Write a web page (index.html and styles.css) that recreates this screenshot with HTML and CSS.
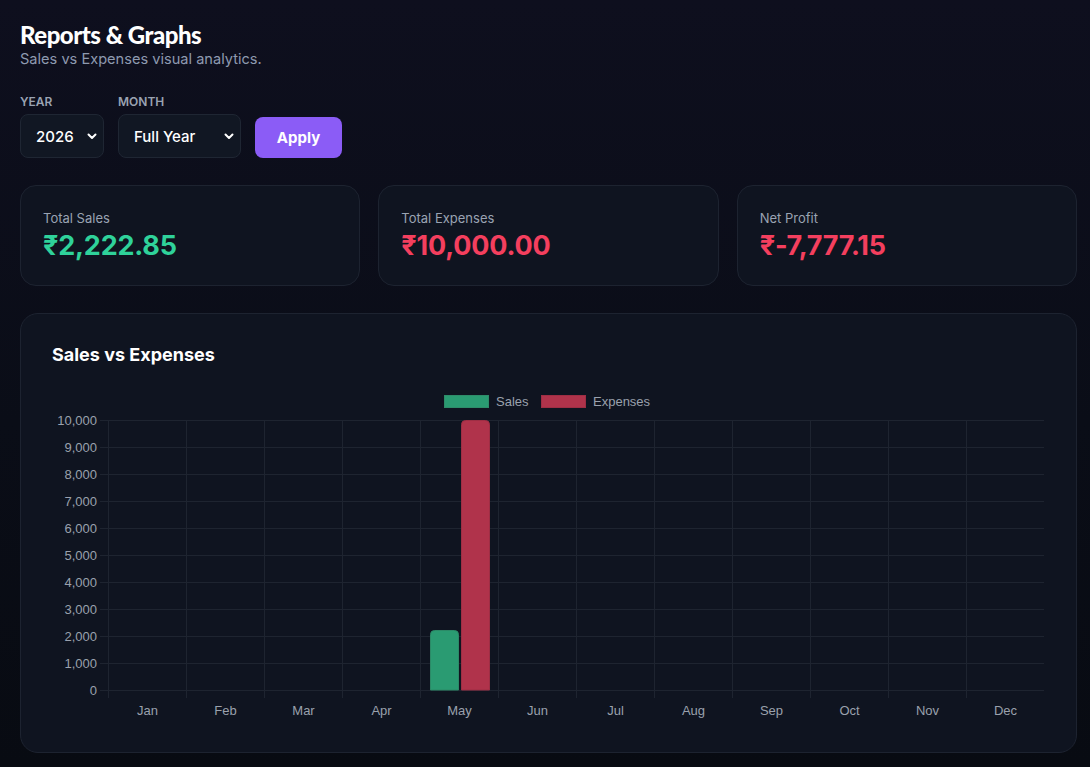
FILE: index.html
```html
<!DOCTYPE html>
<html lang="en">
<head>
  <meta charset="UTF-8" />
  <meta name="viewport" content="width=device-width, initial-scale=1.0" />
  <title>Reports &amp; Graphs</title>
  <link rel="stylesheet" href="styles.css">
</head>
<body>
  <div class="page">
    <header class="page-head">
      <h1>Reports &amp; Graphs</h1>
      <p class="sub">Sales vs Expenses visual analytics.</p>
    </header>

    <form class="filters" onsubmit="return false">
      <div class="field">
        <label for="year">Year</label>
        <div class="select-wrap year">
          <select id="year">
            <option>2026</option>
            <option>2025</option>
          </select>
          <svg class="chev" viewBox="0 0 12 12"><path d="M2.5 4.5 6 8l3.5-3.5" /></svg>
        </div>
      </div>
      <div class="field">
        <label for="month">Month</label>
        <div class="select-wrap month">
          <select id="month">
            <option>Full Year</option>
            <option>January</option>
          </select>
          <svg class="chev" viewBox="0 0 12 12"><path d="M2.5 4.5 6 8l3.5-3.5" /></svg>
        </div>
      </div>
      <button class="apply">Apply</button>
    </form>

    <div class="stats">
      <div class="stat">
        <div class="stat-label">Total Sales</div>
        <div class="stat-value green">₹2,222.85</div>
      </div>
      <div class="stat">
        <div class="stat-label">Total Expenses</div>
        <div class="stat-value red">₹10,000.00</div>
      </div>
      <div class="stat">
        <div class="stat-label">Net Profit</div>
        <div class="stat-value red">₹-7,777.15</div>
      </div>
    </div>

    <section class="chart-card">
      <h2>Sales vs Expenses</h2>
      <svg class="chart" width="993" height="336" viewBox="0 0 993 336">
        <!-- legend -->
        <rect x="392.5" y="10.5" width="44" height="12" fill="#2a9b72" stroke="#2e8c69" />
        <text class="legend" x="444" y="21">Sales</text>
        <rect x="489.5" y="10.5" width="44" height="12" fill="#b0334b" stroke="#9e2e44" />
        <text class="legend" x="541" y="21">Expenses</text>

        <g class="grid">
          <line x1="48" y1="35.5" x2="992" y2="35.5" />
          <line x1="48" y1="62.5" x2="992" y2="62.5" />
          <line x1="48" y1="89.5" x2="992" y2="89.5" />
          <line x1="48" y1="116.5" x2="992" y2="116.5" />
          <line x1="48" y1="143.5" x2="992" y2="143.5" />
          <line x1="48" y1="170.5" x2="992" y2="170.5" />
          <line x1="48" y1="197.5" x2="992" y2="197.5" />
          <line x1="48" y1="224.5" x2="992" y2="224.5" />
          <line x1="48" y1="251.5" x2="992" y2="251.5" />
          <line x1="48" y1="278.5" x2="992" y2="278.5" />
          <line x1="48" y1="305.5" x2="992" y2="305.5" />
          <line x1="56.5" y1="35" x2="56.5" y2="313" />
          <line x1="134.5" y1="35" x2="134.5" y2="313" />
          <line x1="212.5" y1="35" x2="212.5" y2="313" />
          <line x1="290.5" y1="35" x2="290.5" y2="313" />
          <line x1="368.5" y1="35" x2="368.5" y2="313" />
          <line x1="446.5" y1="35" x2="446.5" y2="313" />
          <line x1="524.5" y1="35" x2="524.5" y2="313" />
          <line x1="602.5" y1="35" x2="602.5" y2="313" />
          <line x1="680.5" y1="35" x2="680.5" y2="313" />
          <line x1="758.5" y1="35" x2="758.5" y2="313" />
          <line x1="836.5" y1="35" x2="836.5" y2="313" />
          <line x1="914.5" y1="35" x2="914.5" y2="313" />
        </g>

        <g class="ticks">
          <text x="45" y="40">10,000</text>
          <text x="45" y="67">9,000</text>
          <text x="45" y="94">8,000</text>
          <text x="45" y="121">7,000</text>
          <text x="45" y="148">6,000</text>
          <text x="45" y="175">5,000</text>
          <text x="45" y="202">4,000</text>
          <text x="45" y="229">3,000</text>
          <text x="45" y="256">2,000</text>
          <text x="45" y="283">1,000</text>
          <text x="45" y="310">0</text>
        </g>

        <g class="months">
          <text x="95.5" y="330">Jan</text>
          <text x="173.5" y="330">Feb</text>
          <text x="251.5" y="330">Mar</text>
          <text x="329.5" y="330">Apr</text>
          <text x="407.5" y="330">May</text>
          <text x="485.5" y="330">Jun</text>
          <text x="563.5" y="330">Jul</text>
          <text x="641.5" y="330">Aug</text>
          <text x="719.5" y="330">Sep</text>
          <text x="797.5" y="330">Oct</text>
          <text x="875.5" y="330">Nov</text>
          <text x="953.5" y="330">Dec</text>
        </g>

        <!-- May bars -->
        <path d="M378.5 305V249.5a4 4 0 0 1 4-4h20a4 4 0 0 1 4 4V305Z" fill="#2a9b72" stroke="#2b8a67" />
        <path d="M409.5 305V39.5a4 4 0 0 1 4-4h20a4 4 0 0 1 4 4V305Z" fill="#b0334b" stroke="#9e2e44" />
      </svg>
    </section>
  </div>
</body>
</html>
```

FILE: styles.css
```css
* {
  box-sizing: border-box;
}
html, body {
  margin: 0;
  min-height: 100%;
}
body {
  font-family: Inter, "Noto Sans", sans-serif;
  background: linear-gradient(180deg, #0e0f1e 0%, #0a0d17 55%, #080b12 100%);
  color: #f1f5f9;
  min-height: 767px;
}
.page {
  width: 1077px;
  padding: 20px 0 14px 20px;
}
.page-head h1 {
  margin: 0;
  font-family: Lato, Inter, sans-serif;
  font-weight: 900;
  font-size: 24px;
  line-height: 30px;
  color: #ffffff;
  letter-spacing: -0.5px;
}
.page-head .sub {
  margin: 0;
  font-size: 14.6px;
  line-height: 18px;
  color: #8e9ab0;
}
.filters {
  display: flex;
  align-items: flex-end;
  gap: 14px;
  margin-top: 26px;
}
.field label {
  display: block;
  font-size: 12px;
  font-weight: 600;
  line-height: 14px;
  color: #9aa3b2;
  text-transform: uppercase;
  margin-top: 1px;
  margin-bottom: 5px;
}
.select-wrap {
  position: relative;
  height: 44px;
}
.select-wrap.year {
  width: 84px;
}
.select-wrap.month {
  width: 123px;
}
.select-wrap select {
  appearance: none;
  -webkit-appearance: none;
  width: 100%;
  height: 100%;
  padding: 0 0 0 15px;
  font-family: Inter, sans-serif;
  font-size: 15px;
  font-weight: 500;
  color: #ffffff;
  background-color: #111723;
  border: 1px solid #1f2633;
  border-radius: 8px;
  outline: none;
}
.select-wrap .chev {
  position: absolute;
  right: 6px;
  top: 16px;
  width: 12px;
  height: 12px;
  fill: none;
  stroke: #ffffff;
  stroke-width: 2;
  stroke-linecap: round;
  stroke-linejoin: round;
  pointer-events: none;
}
.apply {
  width: 87px;
  height: 41px;
  border: none;
  border-radius: 8px;
  background-color: #8b5cf6;
  color: #ffffff;
  font-family: Inter, sans-serif;
  font-size: 15px;
  font-weight: 700;
  cursor: pointer;
}
.stats {
  display: grid;
  grid-template-columns: repeat(3, 1fr);
  gap: 18px;
  margin-top: 27px;
}
.stat {
  height: 101px;
  padding: 22px 22px 0;
  background-color: #0f1420;
  border: 1px solid #1d2330;
  border-radius: 16px;
}
.stat-label {
  font-size: 13px;
  line-height: 20px;
  color: #9aa3b2;
}
.stat-value {
  margin-top: 1px;
  font-size: 27px;
  font-weight: 700;
  line-height: 34px;
  letter-spacing: -0.2px;
}
.stat-value.green {
  color: #2fd29a;
}
.stat-value.red {
  color: #f43f5e;
}
.chart-card {
  margin-top: 27px;
  padding: 31px;
  background-color: #0f1420;
  border: 1px solid #1d2330;
  border-radius: 18px;
}
.chart-card h2 {
  margin: 0 0 20px;
  font-size: 18px;
  font-weight: 700;
  line-height: 20px;
  color: #ffffff;
}
.chart {
  display: block;
}
.chart text {
  font-family: "Liberation Sans", Arial, sans-serif;
  font-size: 13px;
  fill: #9aa1ad;
}
.grid line {
  stroke: #1e2430;
  stroke-width: 1;
}
.ticks text {
  text-anchor: end;
}
.months text {
  text-anchor: middle;
}
```
